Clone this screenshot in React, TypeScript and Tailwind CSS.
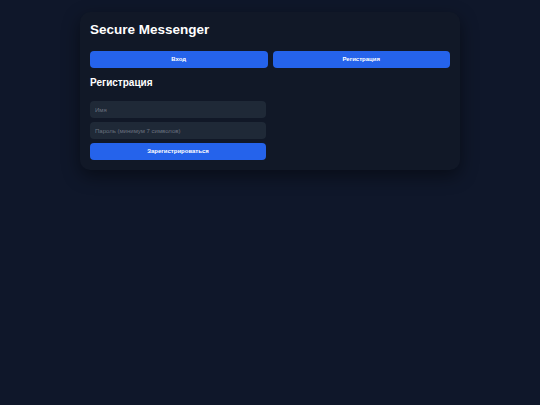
import React from "react";

export default function App() {
  return (
    <div
      className="min-h-[405px] w-full bg-[#0f172a] pt-[12px]"
      style={{ fontFamily: '"Liberation Sans", Arial, sans-serif' }}
    >
      <div className="mx-auto w-[380px] rounded-[10px] bg-[#111827] p-[10px] shadow-[0_6px_18px_rgba(0,0,0,0.45)]">
        <h1 className="mb-[13px] text-[13.5px] font-bold leading-[16px] text-white">
          Secure Messenger
        </h1>
        <div className="flex gap-[5px]">
          <button className="h-[17px] flex-1 rounded-[4px] bg-[#2563eb] text-[6px] font-bold text-white">
            Вход
          </button>
          <button className="h-[17px] flex-1 rounded-[4px] bg-[#2563eb] text-[6px] font-bold text-white">
            Регистрация
          </button>
        </div>
        <h2 className="mt-[9px] mb-[12px] text-[10px] font-bold leading-[12px] text-white">
          Регистрация
        </h2>
        <div className="flex w-[176px] flex-col gap-[4px]">
          <input
            className="h-[17px] rounded-[4px] bg-[#1f2937] px-[5px] text-[6px] text-white outline-none placeholder:text-[#6b7280]"
            placeholder="Имя"
          />
          <input
            className="h-[17px] rounded-[4px] bg-[#1f2937] px-[5px] text-[6px] text-white outline-none placeholder:text-[#6b7280]"
            placeholder="Пароль (минимум 7 символов)"
            type="password"
          />
          <button className="h-[17px] rounded-[4px] bg-[#2563eb] text-[6px] font-bold text-white">
            Зарегистрироваться
          </button>
        </div>
      </div>
    </div>
  );
}
